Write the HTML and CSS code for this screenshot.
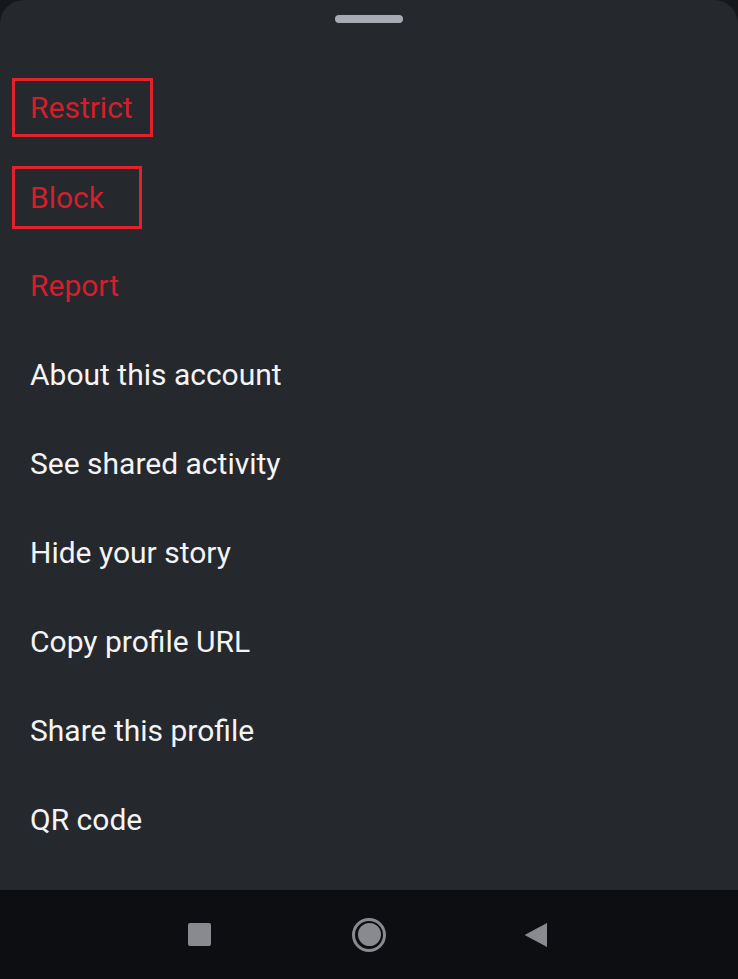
FILE: index.html
```html
<!DOCTYPE html>
<html lang="en">
<head>
<meta charset="utf-8">
<title>Profile options</title>
<link rel="stylesheet" href="styles.css">
</head>
<body>
<div class="screen">
  <div class="sheet">
    <div class="handle"></div>
    <ul class="menu">
      <li class="item"><span class="label danger boxed boxed-a">Restrict</span></li>
      <li class="item"><span class="label danger boxed boxed-b">Block</span></li>
      <li class="item"><span class="label danger">Report</span></li>
      <li class="item"><span class="label">About this account</span></li>
      <li class="item"><span class="label">See shared activity</span></li>
      <li class="item"><span class="label">Hide your story</span></li>
      <li class="item"><span class="label">Copy profile URL</span></li>
      <li class="item"><span class="label">Share this profile</span></li>
      <li class="item"><span class="label">QR code</span></li>
    </ul>
  </div>
  <nav class="navbar">
    <span class="nav-square"></span>
    <span class="nav-home"><span class="nav-home-dot"></span></span>
    <svg class="nav-back" width="22" height="24" viewBox="0 0 22 24"><path d="M22 0.5 L22 23.5 L0.5 12 Z" fill="#898a8f" stroke="#898a8f" stroke-width="1" stroke-linejoin="round"/></svg>
  </nav>
</div>
</body>
</html>
```
FILE: styles.css
```css
html, body {
  margin: 0;
  padding: 0;
  background: #15171b;
}
.screen {
  width: 738px;
  height: 979px;
  display: flex;
  flex-direction: column;
  overflow: hidden;
  font-family: Roboto, "Noto Sans", Arial, sans-serif;
}
.sheet {
  height: 890px;
  background: #25282d;
  border-radius: 24px 24px 0 0;
  padding-top: 15px;
  box-sizing: border-box;
  display: flex;
  flex-direction: column;
}
.handle {
  align-self: center;
  width: 68px;
  height: 8px;
  border-radius: 4px;
  background: #a9abb4;
}
.menu {
  list-style: none;
  margin: 40px 0 0 0;
  padding: 0;
}
.item {
  height: 89px;
  display: flex;
  align-items: center;
  padding-left: 12px;
}
.label {
  display: inline-flex;
  align-items: center;
  box-sizing: border-box;
  height: 59px;
  padding: 0 15px;
  border: 3px solid transparent;
  font-size: 30px;
  color: #f4f4f5;
  letter-spacing: 0;
}
.danger {
  color: #d1202b;
}
.boxed {
  border-color: #e1222c;
}
.boxed-a {
  padding-right: 17px;
}
.boxed-b {
  height: 63px;
  padding-right: 35px;
  margin-top: 1px;
}
.navbar {
  flex: 1;
  background: #0c0e12;
  display: flex;
  align-items: center;
  padding-left: 188px;
  gap: 141px;
}
.nav-square {
  width: 23px;
  height: 23px;
  border-radius: 2px;
  background: #898a8f;
}
.nav-home {
  width: 34px;
  height: 34px;
  box-sizing: border-box;
  border: 3px solid #898a8f;
  border-radius: 50%;
  display: flex;
  align-items: center;
  justify-content: center;
  margin-right: -2px;
}
.nav-home-dot {
  width: 23px;
  height: 23px;
  border-radius: 50%;
  background: #898a8f;
}
.nav-back {
  display: block;
}
```
